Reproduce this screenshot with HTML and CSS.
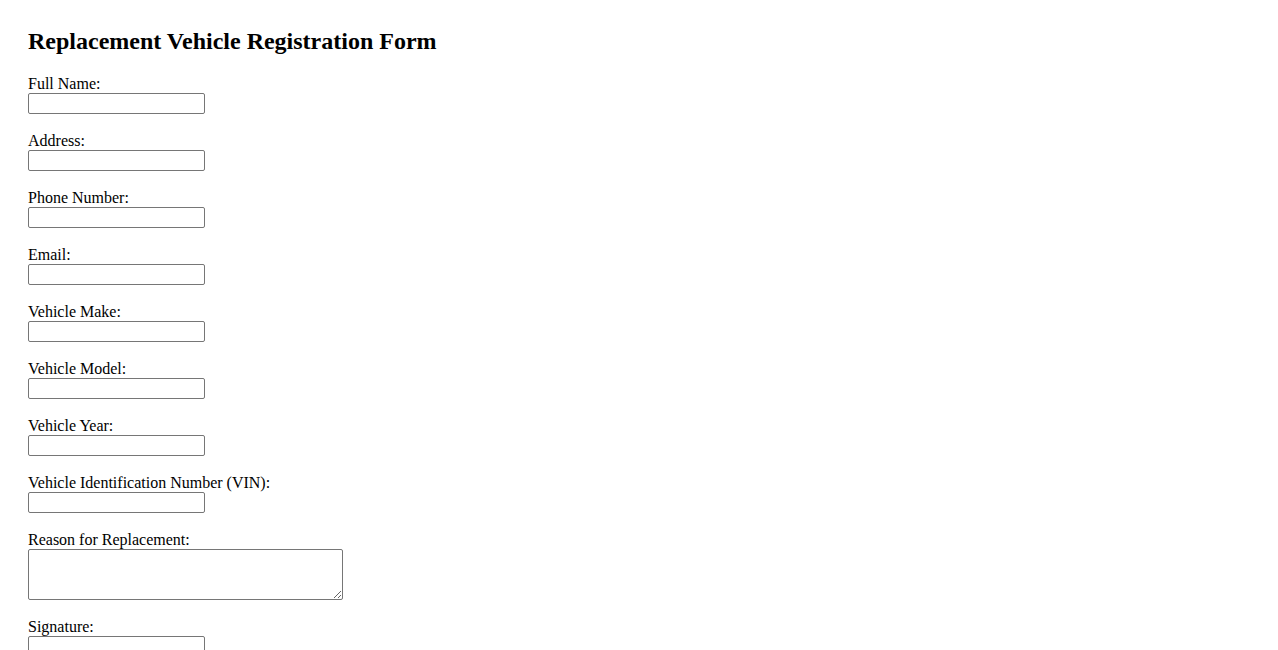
FILE: index.html
```html
<!DOCTYPE html>
<html lang="en">
<head>
<meta charset="utf-8">
<title>Replacement Vehicle Registration Form</title>
<link rel="stylesheet" href="styles.css">
</head>
<body>
<h2 class="title">Replacement Vehicle Registration Form</h2>
<form class="form">
  <div class="field"><label class="label" for="name">Full Name:</label><input class="input" id="name" type="text"></div>
  <div class="field"><label class="label" for="address">Address:</label><input class="input" id="address" type="text"></div>
  <div class="field"><label class="label" for="phone">Phone Number:</label><input class="input" id="phone" type="text"></div>
  <div class="field"><label class="label" for="email">Email:</label><input class="input" id="email" type="text"></div>
  <div class="field"><label class="label" for="make">Vehicle Make:</label><input class="input" id="make" type="text"></div>
  <div class="field"><label class="label" for="model">Vehicle Model:</label><input class="input" id="model" type="text"></div>
  <div class="field"><label class="label" for="year">Vehicle Year:</label><input class="input" id="year" type="text"></div>
  <div class="field"><label class="label" for="vin">Vehicle Identification Number (VIN):</label><input class="input" id="vin" type="text"></div>
  <div class="field"><label class="label" for="reason">Reason for Replacement:</label><textarea class="textarea" id="reason"></textarea></div>
  <div class="field"><label class="label" for="signature">Signature:</label><input class="input" id="signature" type="text"></div>
</form>
</body>
</html>
```
FILE: styles.css
```css
html, body {
  margin: 0;
  background: #ffffff;
}
body {
  padding: 28px;
  font-family: "Liberation Serif", "Times New Roman", serif;
  font-size: 16px;
  color: #000000;
}
.title {
  margin: 0 0 20px 0;
  font-size: 24px;
  line-height: 27px;
  font-weight: bold;
}
.form {
  display: flex;
  flex-direction: column;
  gap: 18px;
}
.field {
  display: flex;
  flex-direction: column;
  align-items: flex-start;
}
.label {
  display: block;
  line-height: 18px;
}
.input {
  box-sizing: border-box;
  width: 177px;
  height: 21px;
  margin: 0;
  padding: 1px 2px;
  border: 1px solid #767676;
  border-radius: 2px;
  background: #ffffff;
  font-family: "Liberation Sans", Arial, sans-serif;
  font-size: 13.333px;
}
.textarea {
  box-sizing: border-box;
  width: 315px;
  height: 51px;
  margin: 0;
  padding: 2px;
  border: 1px solid #767676;
  border-radius: 2px;
  background: #ffffff;
  font-family: "Liberation Mono", monospace;
  font-size: 13.333px;
  resize: both;
}
```
